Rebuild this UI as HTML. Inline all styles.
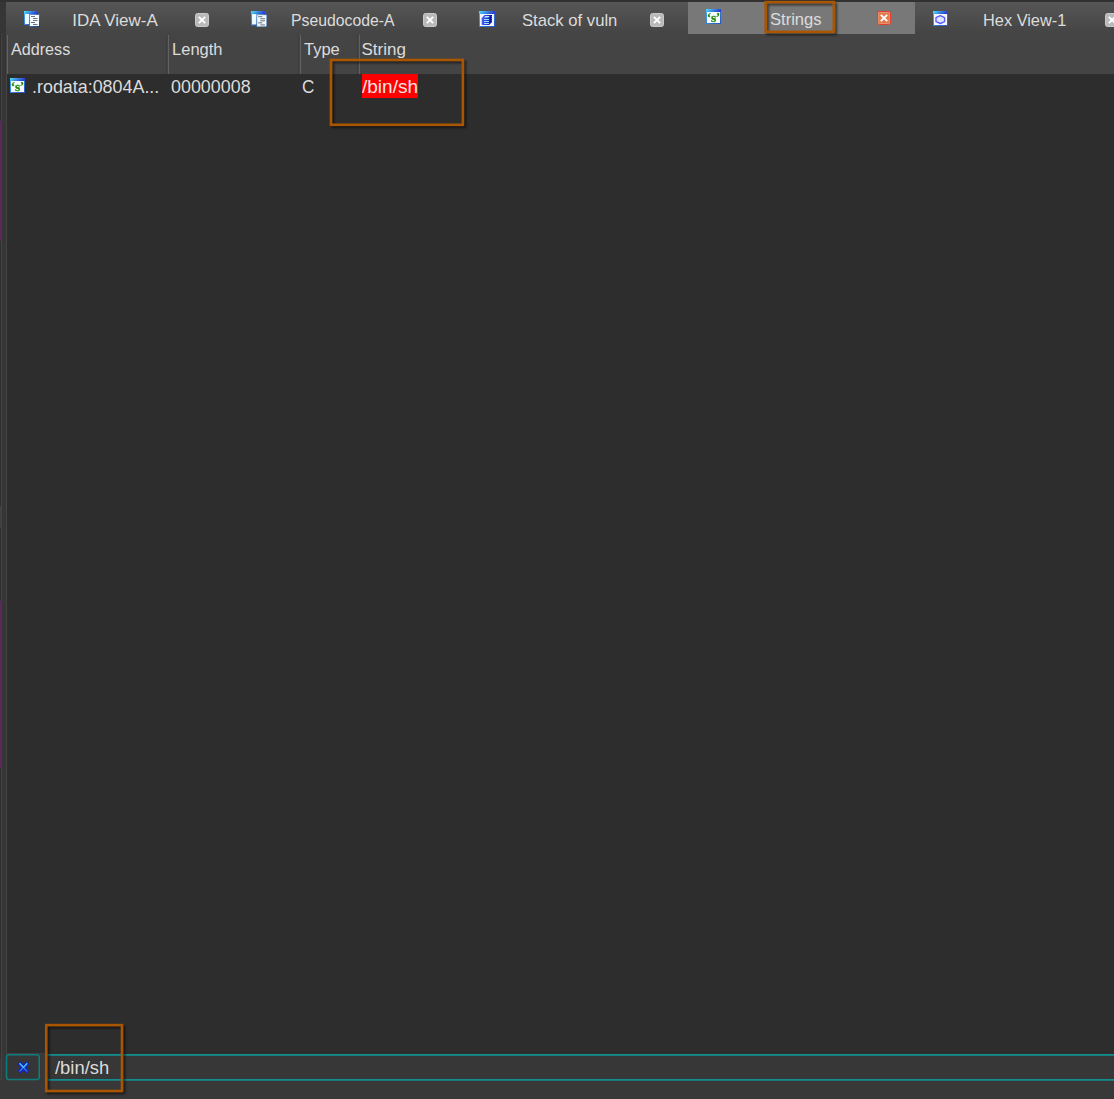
<!DOCTYPE html>
<html lang="en">
<head>
<meta charset="utf-8">
<title>Strings</title>
<style>
html,body{margin:0;padding:0;}
body{width:1114px;height:1099px;overflow:hidden;background:#2d2d2d;position:relative;
  font-family:"Liberation Sans",sans-serif;font-size:17px;color:#dcdcdc;}
.abs{position:absolute;}
.t{position:absolute;white-space:nowrap;line-height:20px;height:20px;transform-origin:0 50%;}
#topedge{left:0;top:0;width:1114px;height:2px;background:#313131;}
#leftstrip{left:0;top:2px;width:6px;height:1078px;background:#363636;}
#leftstrip0{left:0;top:34px;width:1px;height:1025px;background:#2f2f2f;}
#leftstrip1{left:1px;top:34px;width:1px;height:1046px;background:#434343;}
#tabbar{left:6px;top:2px;width:1108px;height:32px;background:linear-gradient(#565656,#444444);}
#acttab{left:688px;top:2px;width:227px;height:32px;background:#787878;}
#header{left:6px;top:34px;width:1108px;height:40px;background:#444444;}
.sep{position:absolute;top:35px;width:1px;height:39px;background:#626262;box-shadow:-2px 0 0 #3d3d3d;}
#panel{left:7px;top:74px;width:1107px;height:979px;background:#2d2d2d;}
#panelL{left:6px;top:74px;width:1px;height:979px;background:#444444;}
#panelB{left:6px;top:1053px;width:40px;height:1px;background:#3f3f3f;}
#bottom{left:0;top:1054px;width:1114px;height:45px;background:#383838;}
.hl{position:absolute;left:362px;top:74px;width:56px;height:24px;background:#ff0000;}
</style>
</head>
<body>
<div class="abs" id="topedge"></div>
<div class="abs" id="leftstrip"></div>
<div class="abs" id="tabbar"></div>
<div class="abs" id="acttab"></div>
<div class="abs" id="header"></div>
<div class="sep" style="left:7px;box-shadow:none"></div>
<div class="sep" style="left:168px"></div>
<div class="sep" style="left:300px"></div>
<div class="sep" style="left:359px"></div>
<div class="abs" id="panel"></div>
<div class="abs" id="panelL"></div>
<div class="abs" id="bottom"></div>
<div class="abs" id="leftstrip0"></div>
<div class="abs" style="left:0;top:1079px;width:2px;height:1px;background:#434343"></div>
<div class="abs" id="leftstrip1"></div>
<div class="abs" style="left:0;top:121px;width:1px;height:120px;background:#5e2a5e"></div>
<div class="abs" style="left:1px;top:121px;width:1px;height:120px;background:#4a3349"></div>
<div class="abs" style="left:0;top:601px;width:1px;height:167px;background:#5e2a5e"></div>
<div class="abs" style="left:1px;top:601px;width:1px;height:167px;background:#4a3349"></div>
<div class="abs" style="left:0;top:506px;width:1px;height:22px;background:#404040"></div>
<div class="abs" id="panelB"></div>
<svg class="abs" style="left:0;top:1050px" width="1114" height="49" viewBox="0 1050 1114 49">
  <rect x="45.9" y="1054.9" width="1080" height="25" fill="#373737" stroke="#0c9e9e" stroke-width="1.5"/>
  <rect x="6.55" y="1054.75" width="32.7" height="24.75" rx="2.6" fill="#363636" stroke="#0c7e7e" stroke-width="1.5"/>
</svg>

<!-- tab labels -->
<span class="t" id="t1" style="left:72.2px;top:11px;transform:scaleX(1.0)">IDA View-A</span>
<span class="t" id="t2" style="left:290.7px;top:11px;transform:scaleX(.929)">Pseudocode-A</span>
<span class="t" id="t3" style="left:521.6px;top:11px;transform:scaleX(.98)">Stack of vuln</span>
<span class="t" id="t4" style="left:770.4px;top:10px;transform:scaleX(.975)">Strings</span>
<span class="t" id="t5" style="left:982.8px;top:11px;transform:scaleX(.962)">Hex View-1</span>

<!-- header labels -->
<span class="t" id="h1" style="left:10.7px;top:40px;transform:scaleX(.95)">Address</span>
<span class="t" id="h2" style="left:171.9px;top:40px;transform:scaleX(.972)">Length</span>
<span class="t" id="h3" style="left:304px;top:40px;transform:scaleX(.97)">Type</span>
<span class="t" id="h4" style="left:361.5px;top:40px;transform:scaleX(1.0)">String</span>

<!-- row -->
<div class="hl"></div>
<span class="t" id="r1" style="left:32px;top:77px;font-size:17.8px;transform:scaleX(1.006)">.rodata:0804A...</span>
<span class="t" id="r2" style="left:171px;top:77px;font-size:17.8px;transform:scaleX(1.006)">00000008</span>
<span class="t" id="r3" style="left:302px;top:77px;font-size:17.8px;transform:scaleX(.96)">C</span>
<span class="t" id="r4" style="left:362px;top:77px;font-size:17.8px;color:#f6e4e4;transform:scaleX(1.07)">/bin/sh</span>

<!-- search text -->
<span class="t" id="s1" style="left:54.8px;top:1058px;font-size:17.8px;transform:scaleX(1.036)">/bin/sh</span>

<!-- tab icons -->
<svg class="abs" style="left:24px;top:11px" width="16" height="16" viewBox="0 0 16 16">
  <defs>
    <linearGradient id="tb" x1="0" y1="0" x2="1" y2="0.25"><stop offset="0" stop-color="#4fe6ff"/><stop offset=".55" stop-color="#3a86e0"/><stop offset="1" stop-color="#2c3fd2"/></linearGradient>
    <linearGradient id="bd" x1="0" y1="0" x2="1" y2="1"><stop offset="0" stop-color="#45b0f5"/><stop offset="1" stop-color="#2a52c0"/></linearGradient>
    <linearGradient id="dk" x1="0" y1="0" x2="1" y2="1"><stop offset="0" stop-color="#6f9fd6"/><stop offset="1" stop-color="#0d3a74"/></linearGradient>
    <linearGradient id="stk" x1="0" y1="0" x2="1" y2="0"><stop offset="0" stop-color="#4262f0"/><stop offset=".55" stop-color="#2038d2"/><stop offset="1" stop-color="#050c84"/></linearGradient>
  </defs>
  <rect x="0" y="0" width="14" height="14" fill="url(#bd)"/>
  <rect x="0" y="0" width="14" height="3" fill="url(#tb)"/>
  <rect x="1" y="3" width="12" height="10" fill="#eafcff"/>
  <rect x="5" y="3" width="11" height="13" fill="url(#dk)"/>
  <rect x="6" y="4" width="9" height="11" fill="#f4f8ff"/>
  <g fill="#6e737c"><rect x="7" y="5" width="4" height="1"/><rect x="9" y="7" width="4.5" height="1"/><rect x="9" y="9" width="4.5" height="1"/><rect x="7" y="11" width="4" height="1"/><rect x="9" y="13" width="4.5" height="1"/></g>
</svg>
<svg class="abs" style="left:250.5px;top:10.5px" width="16.5" height="16.5" viewBox="0 0 16 16">
  <rect x="0" y="0" width="14" height="14" fill="url(#bd)"/>
  <rect x="0" y="0" width="14" height="3" fill="url(#tb)"/>
  <rect x="1" y="3" width="12" height="10" fill="#eafcff"/>
  <rect x="5" y="3" width="11" height="13" fill="url(#dk)"/>
  <rect x="6" y="4" width="9" height="11" fill="#f4f8ff"/>
  <g fill="#6e737c"><rect x="7" y="5" width="4" height="1"/><rect x="9" y="7" width="4.5" height="1"/><rect x="9" y="9" width="4.5" height="1"/><rect x="7" y="11" width="4" height="1"/><rect x="9" y="13" width="4.5" height="1"/></g>
</svg>
<svg class="abs" style="left:478.7px;top:10.9px" width="16" height="16" viewBox="0 0 16 16">
  <rect x="0" y="0" width="16" height="16" fill="url(#bd)"/>
  <rect x="0" y="0" width="16" height="3" fill="url(#tb)"/>
  <rect x="1" y="3" width="14" height="12" fill="#f6f6ff"/>
  <polygon points="5.6,4 13,4 13,5 12.4,5.5 13,6 13,7 12.4,7.5 13,8 13,9 12.4,9.5 13,10 13,11 10.2,14 2.6,14 3.2,13.5 2.6,13 2.6,12 3.2,11.5 2.6,11 2.6,10 3.2,9.5 2.6,9 2.6,7.2" fill="url(#stk)"/>
  <polygon points="6.3,4.9 10.6,4.9 9.5,6.4 4.9,6.4" fill="#b4eaf8"/>
  <g fill="#9fe2f6"><rect x="5" y="8" width="5" height="1"/><rect x="5" y="10" width="5" height="1"/><rect x="5" y="12" width="5" height="1"/></g>
</svg>
<svg class="abs" style="left:705.8px;top:8.9px" width="15" height="15" viewBox="0 0 15 15">
  <rect x="0" y="0" width="15" height="15" fill="url(#bd)"/>
  <rect x="0" y="0" width="15" height="3" fill="url(#tb)"/>
  <rect x="1" y="3" width="13" height="11" fill="#f4fdff"/>
  <g font-family="Liberation Serif, serif" font-weight="bold" fill="#2b8a0c" stroke="#2b8a0c" stroke-width=".35" text-anchor="middle" style="will-change:transform"><text x="7.55" y="13" font-size="13.5">s</text><text x="3.1" y="12.9" font-size="12">‘</text><text x="12" y="12.3" font-size="12">’</text></g>
</svg>
<svg class="abs" style="left:932.8px;top:10.9px" width="15" height="15" viewBox="0 0 15 15">
  <rect x="0" y="0" width="15" height="15" fill="url(#bd)"/>
  <rect x="0" y="0" width="15" height="3" fill="url(#tb)"/>
  <rect x="1" y="3" width="13" height="11" fill="#f6f8ff"/>
  <polygon points="7.3,4.7 11.6,6.7 11.6,10.6 7.3,12.5 3,10.6 3,6.7" fill="#dfe9fb" stroke="#5c5cff" stroke-width="1.4" stroke-linejoin="round"/>
</svg>
<!-- row icon -->
<svg class="abs" style="left:9.9px;top:78px" width="15" height="15" viewBox="0 0 15 15">
  <rect x="0" y="0" width="15" height="15" fill="url(#bd)"/>
  <rect x="0" y="0" width="15" height="3" fill="url(#tb)"/>
  <rect x="1" y="3" width="13" height="11" fill="#f4fdff"/>
  <g font-family="Liberation Serif, serif" font-weight="bold" fill="#2b8a0c" stroke="#2b8a0c" stroke-width=".35" text-anchor="middle" style="will-change:transform"><text x="7.55" y="13" font-size="13.5">s</text><text x="3.1" y="12.9" font-size="12">‘</text><text x="12" y="12.3" font-size="12">’</text></g>
</svg>

<!-- close buttons -->
<svg class="abs" style="left:194.8px;top:13px" width="14" height="14" viewBox="0 0 14 14"><rect x=".5" y=".5" width="13" height="13" rx="2" fill="#b9b9b9" stroke="#c9c9c9"/><path d="M3.8 3.9 L10.2 10.1 M10.2 3.9 L3.8 10.1" stroke="#fff" stroke-width="1.95" stroke-linecap="butt"/></svg>
<svg class="abs" style="left:422.6px;top:13px" width="14" height="14" viewBox="0 0 14 14"><rect x=".5" y=".5" width="13" height="13" rx="2" fill="#b9b9b9" stroke="#c9c9c9"/><path d="M3.8 3.9 L10.2 10.1 M10.2 3.9 L3.8 10.1" stroke="#fff" stroke-width="1.95"/></svg>
<svg class="abs" style="left:650px;top:13px" width="14" height="14" viewBox="0 0 14 14"><rect x=".5" y=".5" width="13" height="13" rx="2" fill="#b9b9b9" stroke="#c9c9c9"/><path d="M3.8 3.9 L10.2 10.1 M10.2 3.9 L3.8 10.1" stroke="#fff" stroke-width="1.95"/></svg>
<svg class="abs" style="left:876.5px;top:11px" width="14" height="14" viewBox="0 0 14 14"><rect x=".5" y=".5" width="13" height="13" rx="2" fill="#e17a4c" stroke="#e0412f"/><rect x="1.5" y="1.5" width="11" height="11" rx="1" fill="none" stroke="#e8906f"/><path d="M3.8 3.9 L10.2 10.1 M10.2 3.9 L3.8 10.1" stroke="#fff" stroke-width="1.95"/></svg>
<svg class="abs" style="left:1104.8px;top:13px" width="14" height="14" viewBox="0 0 14 14"><rect x=".5" y=".5" width="13" height="13" rx="2" fill="#b9b9b9" stroke="#c9c9c9"/><path d="M3.8 3.9 L10.2 10.1 M10.2 3.9 L3.8 10.1" stroke="#fff" stroke-width="1.95"/></svg>

<!-- search close x -->
<svg class="abs" style="left:16px;top:1060px" width="15" height="15" viewBox="0 0 15 15">
  <path d="M3.1 2.85 L11.7 11.95 M11.7 2.85 L3.1 11.95" stroke="#1024c2" stroke-width="4.2" stroke-linecap="butt"/>
  <path d="M3.9 3.7 L10.9 11.1 M10.9 3.7 L3.9 11.1" stroke="#3a7fe4" stroke-width="1.3" stroke-linecap="round"/>
  <path d="M4 3.8 L7.4 7.4 L10.8 3.8" stroke="#48c4ee" stroke-width="1.3" stroke-linecap="round" stroke-linejoin="round" fill="none"/>
</svg>

<!-- orange annotation boxes -->
<svg class="abs" style="left:0;top:0;filter:drop-shadow(2.3px 2.3px .8px rgba(0,0,0,.55))" width="1114" height="1099" viewBox="0 0 1114 1099" fill="none" stroke="#aa5600" stroke-width="2.6">
  <rect x="765.7" y="2.15" width="68.15" height="29.75"/>
  <rect x="331" y="59.95" width="131.9" height="64.85"/>
  <rect x="46.25" y="1025.1" width="75.75" height="65.9"/>
</svg>
</body>
</html>
